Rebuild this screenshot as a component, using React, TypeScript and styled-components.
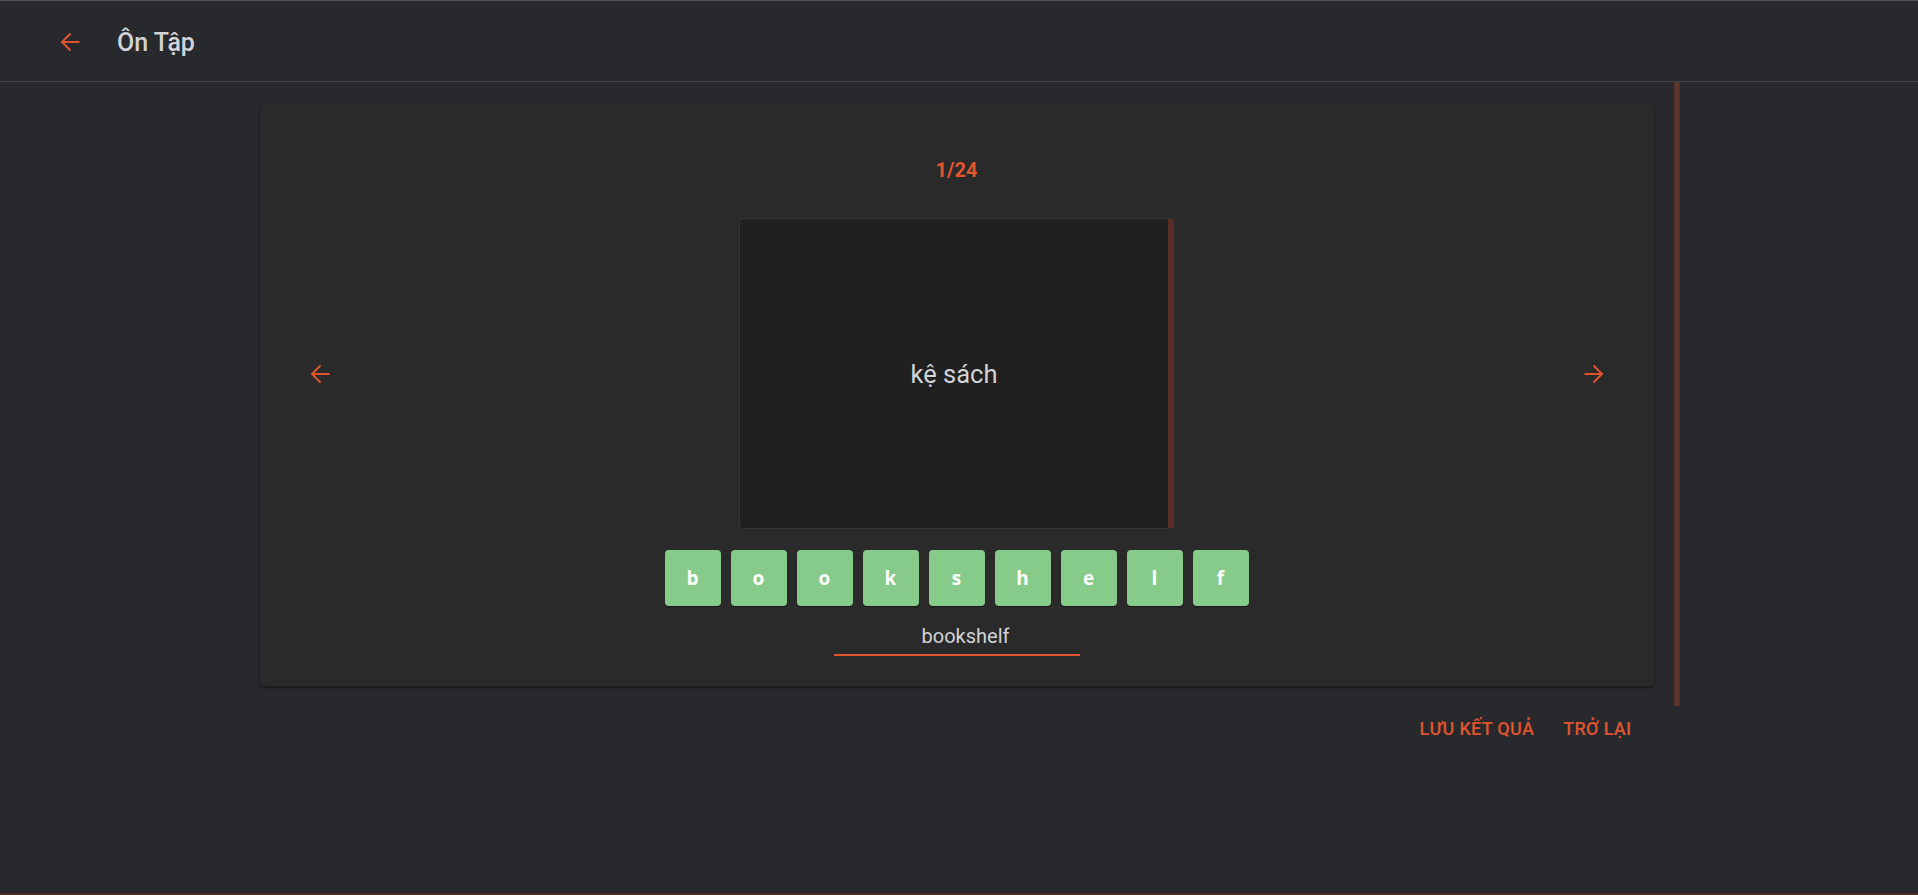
import React from "react";
import styled, { createGlobalStyle } from "styled-components";

const ACCENT = "#e0552f";
const TEXT = "#d1d3d6";

const GlobalStyle = createGlobalStyle`
  html, body {
    margin: 0;
    padding: 0;
    background: #28292d;
    font-family: Roboto, "Noto Sans", "Liberation Sans", sans-serif;
  }
  * { box-sizing: border-box; }
`;

const Page = styled.div`
  min-height: 100vh;
  display: flex;
  flex-direction: column;
  background: #28292d;
`;

const Header = styled.header`
  height: 82px;
  display: flex;
  align-items: center;
  padding: 2px 50px 0;
  border-top: 1px solid #505154;
  border-bottom: 1px solid #434448;
`;

const IconButton = styled.button`
  width: 40px;
  height: 40px;
  padding: 0;
  border: none;
  background: transparent;
  display: flex;
  align-items: center;
  justify-content: center;
  color: ${ACCENT};
  cursor: pointer;
  flex: none;
`;

const Title = styled.h1`
  margin: 2px 0 0 27px;
  font-size: 25px;
  line-height: 28px;
  font-weight: 500;
  color: ${TEXT};
`;

const Main = styled.main`
  display: flex;
  justify-content: center;
  padding-left: 1px;
`;

const Column = styled.div`
  width: 1440px;
  display: flex;
  flex-direction: column;
`;

const ScrollArea = styled.div`
  display: flex;
  height: 624px;
`;

const ScrollContent = styled.div`
  flex: 1;
  padding: 23px 20px 20px;
`;

const ScrollTrack = styled.div`
  width: 6px;
  display: flex;
`;

const ScrollThumb = styled.div`
  flex: 1;
  background: linear-gradient(90deg, #4f2d25, #603a30 50%, #4f2d25);
`;

const Card = styled.section`
  height: 100%;
  background: #2a2a2a;
  border-radius: 4px;
  box-shadow: 0 2px 3px rgba(0, 0, 0, 0.35), 0 0 1px rgba(0, 0, 0, 0.3);
  display: flex;
  flex-direction: column;
  align-items: center;
  padding: 53px 0 30px;
`;

const Counter = styled.div`
  font-size: 20px;
  line-height: 24px;
  font-weight: 700;
  color: ${ACCENT};
`;

const CardRow = styled.div`
  align-self: stretch;
  display: flex;
  align-items: center;
  padding: 0 40px;
  margin-top: 36px;
`;

const Stage = styled.div`
  flex: 1;
  display: flex;
  justify-content: center;
`;

const Flashcard = styled.div`
  width: 435px;
  height: 311px;
  background: #202020;
  border: 1px solid #363636;
  border-right: 6px solid #5a2e24;
  border-radius: 4px;
  display: flex;
  align-items: center;
  justify-content: center;
  font-size: 25.5px;
  color: ${TEXT};
`;

const Tiles = styled.div`
  display: flex;
  gap: 10px;
  margin-top: 21px;
`;

const Tile = styled.div`
  width: 56px;
  height: 56px;
  border-radius: 4px;
  background: #87cb8a;
  box-shadow: 0 1px 1px rgba(0, 0, 0, 0.45);
  display: flex;
  align-items: center;
  justify-content: center;
  color: #ffffff;
  font-family: "Open Sans", "Noto Sans", sans-serif;
  font-weight: 700;
  font-size: 19px;
`;

const AnswerInput = styled.input`
  margin-top: 14px;
  width: 246px;
  padding: 4px 0 6px 18px;
  border: none;
  border-bottom: 2px solid ${ACCENT};
  background: transparent;
  outline: none;
  text-align: center;
  font-family: Roboto, sans-serif;
  font-size: 20px;
  line-height: 24px;
  color: ${TEXT};
`;

const Actions = styled.div`
  display: flex;
  justify-content: flex-end;
  gap: 13px;
  padding: 11px 40px 0 0;
`;

const TextButton = styled.button`
  border: none;
  background: transparent;
  padding: 0 8px;
  font-family: Roboto, sans-serif;
  font-weight: 500;
  font-size: 18px;
  line-height: 24px;
  letter-spacing: 0.3px;
  color: ${ACCENT};
  cursor: pointer;
`;

const BottomBar = styled.div`
  margin-top: auto;
  height: 2px;
  background: #4a2c25;
`;

const Arrow = ({ dir }: { dir: "left" | "right" }) => (
  <svg
    width="20"
    height="20"
    viewBox="0 0 20 20"
    fill="none"
    stroke="currentColor"
    strokeWidth="2"
    style={{ transform: dir === "right" ? "scaleX(-1)" : undefined }}
  >
    <path d="M19.5 10H2" />
    <path d="M10.5 1.5L2 10l8.5 8.5" />
  </svg>
);

const letters = ["b", "o", "o", "k", "s", "h", "e", "l", "f"];

export default function App() {
  return (
    <Page>
      <GlobalStyle />
      <Header>
        <IconButton aria-label="back">
          <Arrow dir="left" />
        </IconButton>
        <Title>Ôn Tập</Title>
      </Header>
      <Main>
        <Column>
          <ScrollArea>
            <ScrollContent>
              <Card>
                <Counter>1/24</Counter>
                <CardRow>
                  <IconButton aria-label="previous">
                    <Arrow dir="left" />
                  </IconButton>
                  <Stage>
                    <Flashcard>kệ sách</Flashcard>
                  </Stage>
                  <IconButton aria-label="next">
                    <Arrow dir="right" />
                  </IconButton>
                </CardRow>
                <Tiles>
                  {letters.map((l, i) => (
                    <Tile key={i}>{l}</Tile>
                  ))}
                </Tiles>
                <AnswerInput value="bookshelf" readOnly />
              </Card>
            </ScrollContent>
            <ScrollTrack>
              <ScrollThumb />
            </ScrollTrack>
          </ScrollArea>
          <Actions>
            <TextButton>LƯU KẾT QUẢ</TextButton>
            <TextButton>TRỞ LẠI</TextButton>
          </Actions>
        </Column>
      </Main>
      <BottomBar />
    </Page>
  );
}
